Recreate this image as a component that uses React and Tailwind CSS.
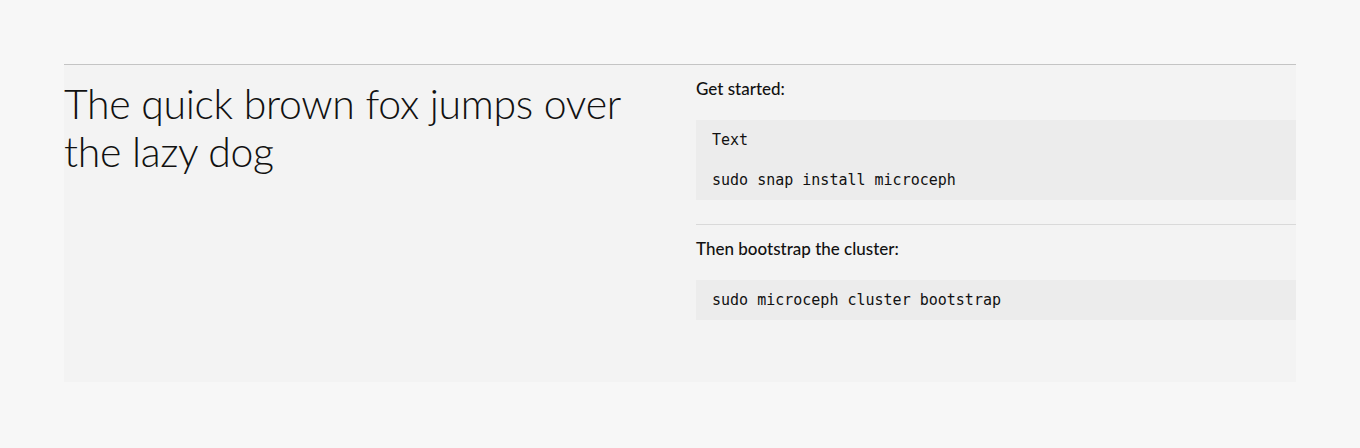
import React from 'react';

const CodeBlock = ({ children }) => (
  <pre className="bg-[#ececec] px-4 py-[10px] text-[15px] leading-5 text-[#111] font-['DejaVu_Sans_Mono',monospace] whitespace-pre">
    {children}
  </pre>
);

const App = () => {
  return (
    <div className="min-h-[448px] w-full bg-[#f7f7f7] pt-16 px-16 font-['Lato',sans-serif]">
      <div className="border-t border-[#c4c4c4]">
        <div className="grid grid-cols-2 gap-8 bg-[#f3f3f3] h-[317px]">
          {/* Heading */}
          <div className="pt-[15px]">
            <h1 className="text-[41px] leading-[48px] font-light text-[#111] tracking-[-0.3px]">
              The quick brown fox jumps over the lazy dog
            </h1>
          </div>

          {/* Steps */}
          <div className="pt-3">
            <p className="text-[17px] leading-6 font-medium text-[#111] mb-[19px]">Get started:</p>
            <CodeBlock>{"Text\n\nsudo snap install microceph"}</CodeBlock>
            <hr className="mt-6 border-t border-[#d9d9d9]" />
            <p className="text-[17px] leading-6 font-medium text-[#111] mt-3 mb-[19px]">Then bootstrap the cluster:</p>
            <CodeBlock>{"sudo microceph cluster bootstrap"}</CodeBlock>
          </div>
        </div>
      </div>
    </div>
  );
};

export default App;
